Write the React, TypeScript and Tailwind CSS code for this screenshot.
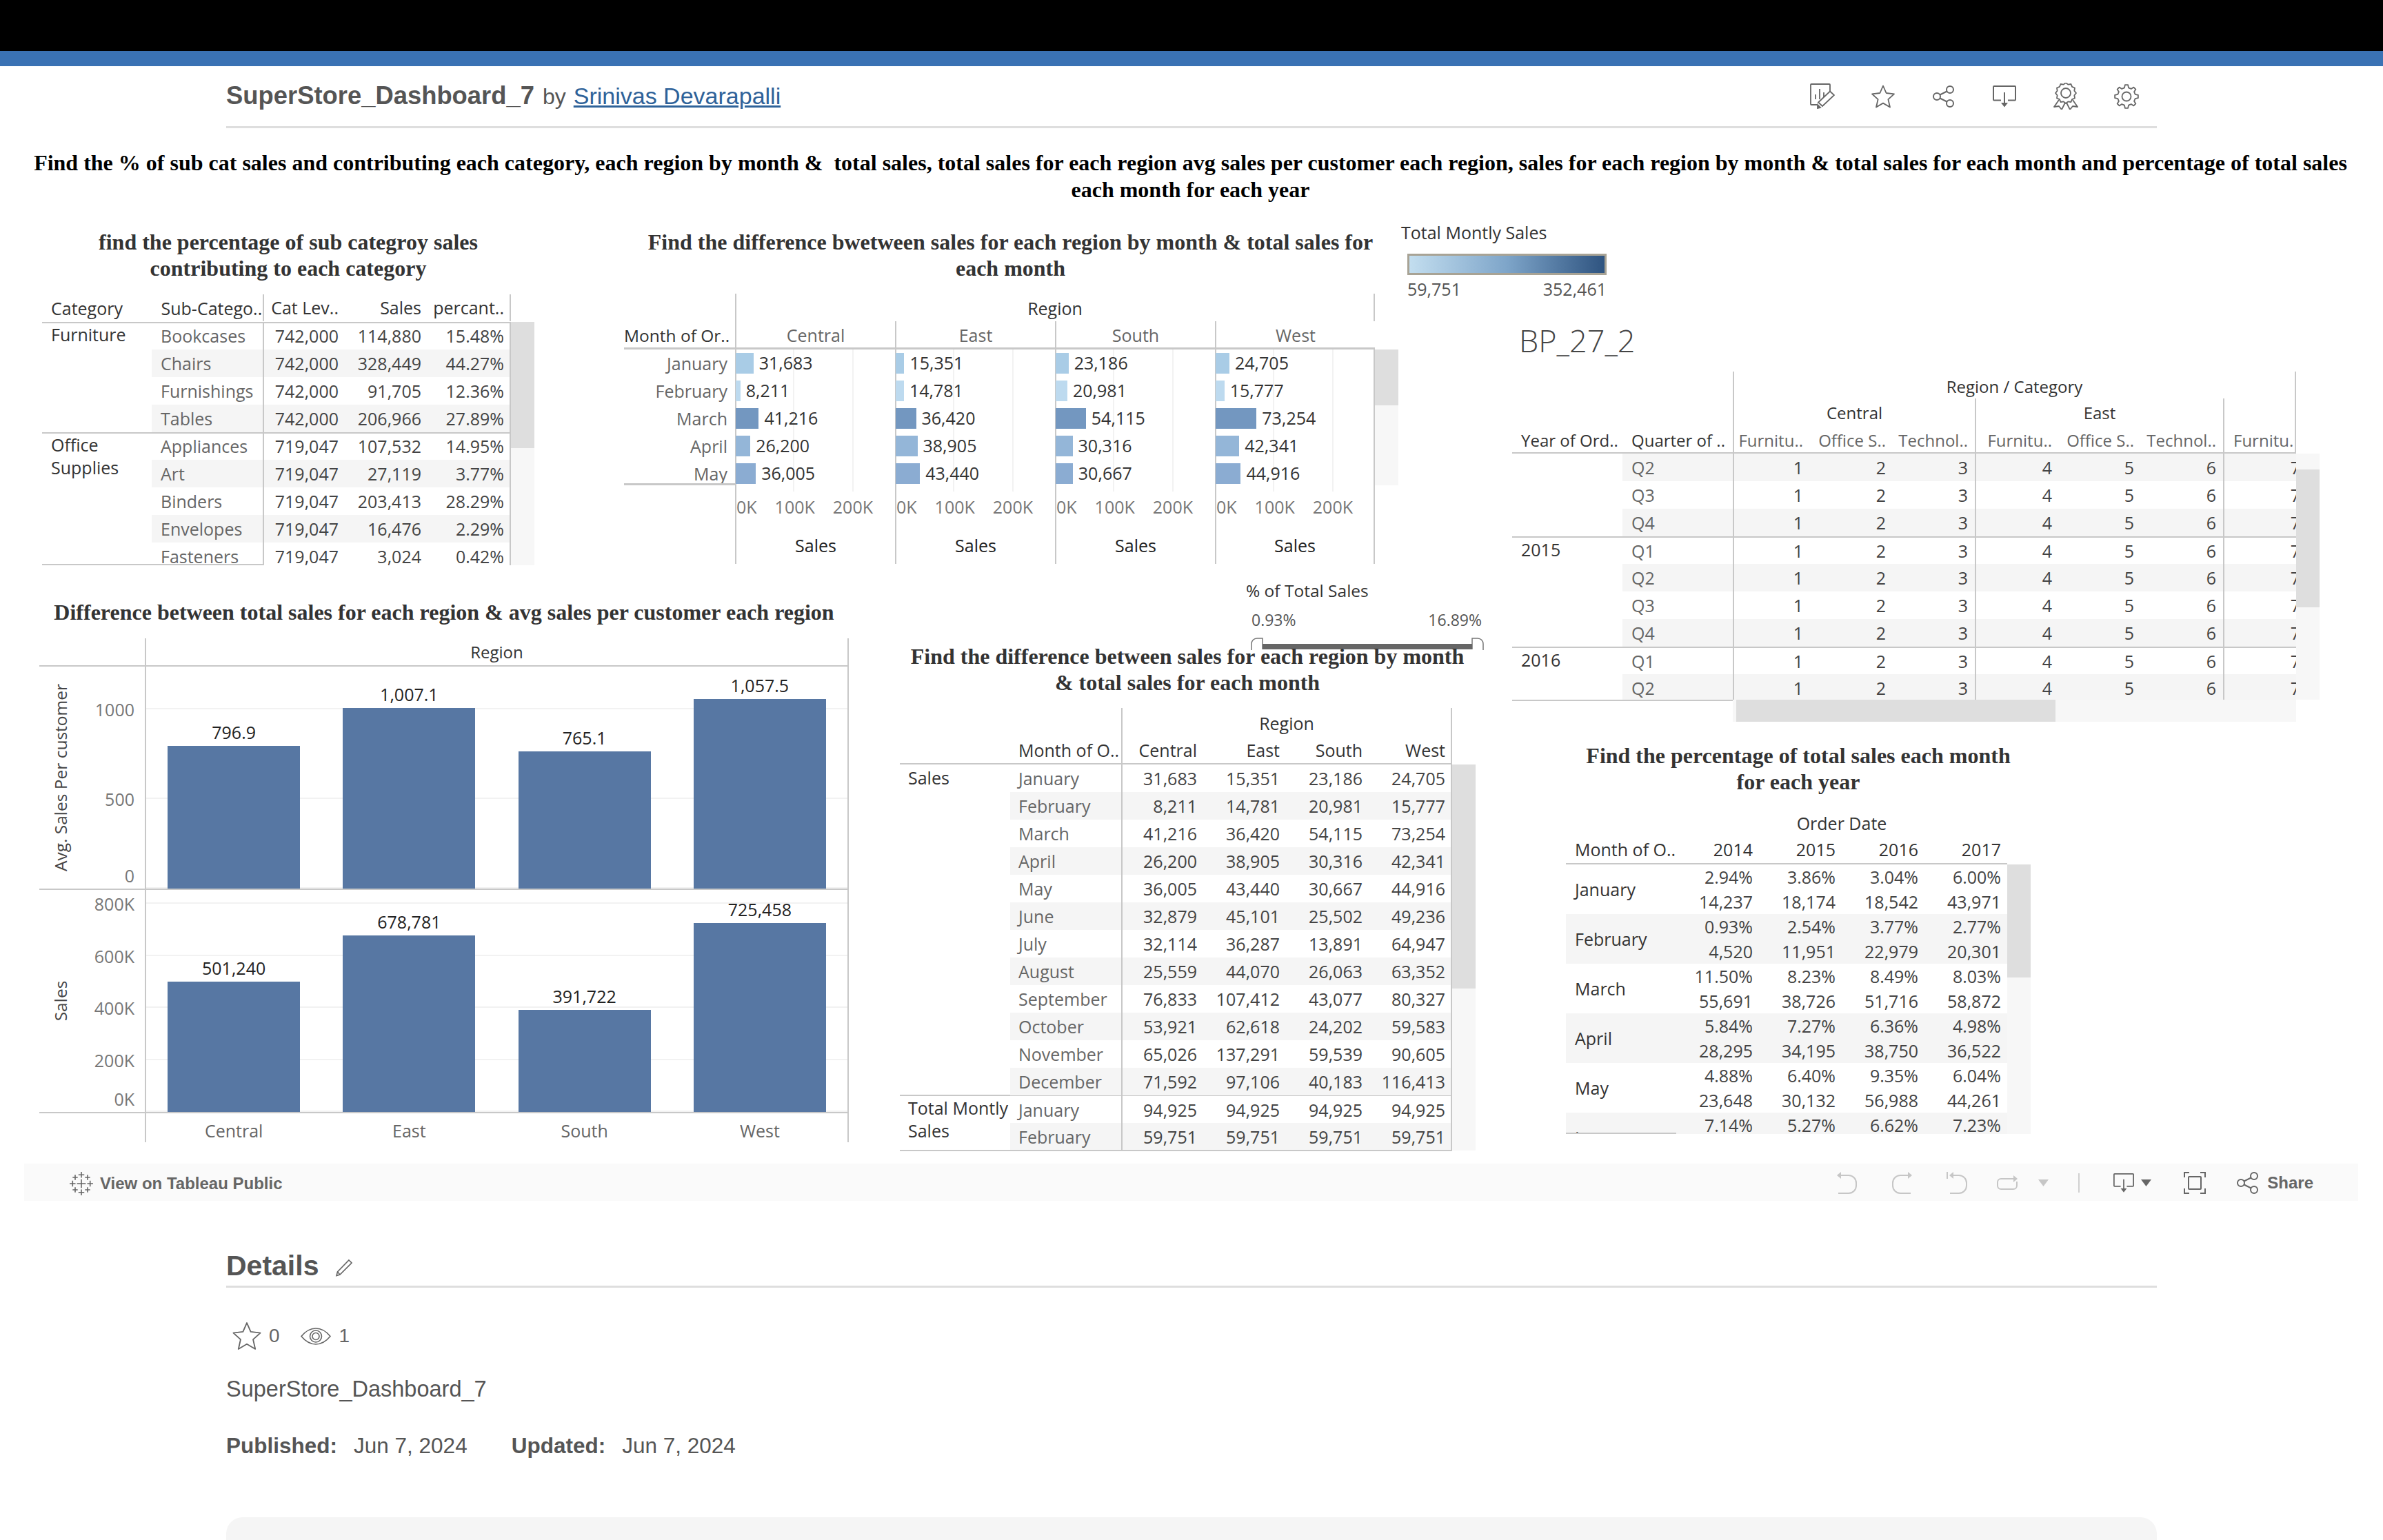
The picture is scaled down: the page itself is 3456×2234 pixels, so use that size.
import React from 'react';

const regions = ['Central', 'East', 'South', 'West'];

const subCategories = [
  {
    name: 'Furniture',
    label: ['Furniture'],
    rows: [
      ['Bookcases', '742,000', '114,880', '15.48%'],
      ['Chairs', '742,000', '328,449', '44.27%'],
      ['Furnishings', '742,000', '91,705', '12.36%'],
      ['Tables', '742,000', '206,966', '27.89%'],
    ],
  },
  {
    name: 'Office',
    label: ['Office', 'Supplies'],
    rows: [
      ['Appliances', '719,047', '107,532', '14.95%'],
      ['Art', '719,047', '27,119', '3.77%'],
      ['Binders', '719,047', '203,413', '28.29%'],
      ['Envelopes', '719,047', '16,476', '2.29%'],
      ['Fasteners', '719,047', '3,024', '0.42%'],
    ],
  },
];

const monthlyBars = [
  { month: 'January', color: '#a9cce6', values: [31683, 15351, 23186, 24705] },
  { month: 'February', color: '#bddaef', values: [8211, 14781, 20981, 15777] },
  { month: 'March', color: '#7397c0', values: [41216, 36420, 54115, 73254] },
  { month: 'April', color: '#94b6d8', values: [26200, 38905, 30316, 42341] },
  { month: 'May', color: '#8bacd2', values: [36005, 43440, 30667, 44916] },
];

const monthlyTable = [
  ['January', '31,683', '15,351', '23,186', '24,705'],
  ['February', '8,211', '14,781', '20,981', '15,777'],
  ['March', '41,216', '36,420', '54,115', '73,254'],
  ['April', '26,200', '38,905', '30,316', '42,341'],
  ['May', '36,005', '43,440', '30,667', '44,916'],
  ['June', '32,879', '45,101', '25,502', '49,236'],
  ['July', '32,114', '36,287', '13,891', '64,947'],
  ['August', '25,559', '44,070', '26,063', '63,352'],
  ['September', '76,833', '107,412', '43,077', '80,327'],
  ['October', '53,921', '62,618', '24,202', '59,583'],
  ['November', '65,026', '137,291', '59,539', '90,605'],
  ['December', '71,592', '97,106', '40,183', '116,413'],
];

const totalTable = [
  ['January', '94,925', '94,925', '94,925', '94,925'],
  ['February', '59,751', '59,751', '59,751', '59,751'],
];

const percentTable = [
  { month: 'January', pct: ['2.94%', '3.86%', '3.04%', '6.00%'], sales: ['14,237', '18,174', '18,542', '43,971'] },
  { month: 'February', pct: ['0.93%', '2.54%', '3.77%', '2.77%'], sales: ['4,520', '11,951', '22,979', '20,301'] },
  { month: 'March', pct: ['11.50%', '8.23%', '8.49%', '8.03%'], sales: ['55,691', '38,726', '51,716', '58,872'] },
  { month: 'April', pct: ['5.84%', '7.27%', '6.36%', '4.98%'], sales: ['28,295', '34,195', '38,750', '36,522'] },
  { month: 'May', pct: ['4.88%', '6.40%', '9.35%', '6.04%'], sales: ['23,648', '30,132', '56,988', '44,261'] },
  { month: 'June', pct: ['7.14%', '5.27%', '6.62%', '7.23%'], sales: ['', '', '', ''] },
];

const quarterGroups = [
  { year: '', quarters: ['Q2', 'Q3', 'Q4'] },
  { year: '2015', quarters: ['Q1', 'Q2', 'Q3', 'Q4'] },
  { year: '2016', quarters: ['Q1', 'Q2'] },
];

// ---- icons ----

function gearPoints(teeth: number, outer: number, inner: number, cx: number, cy: number) {
  const pts: string[] = [];
  const step = (Math.PI * 2) / teeth;
  for (let i = 0; i < teeth; i++) {
    const a = i * step - Math.PI / 2;
    const list = [
      [a - step * 0.3, inner],
      [a - step * 0.16, outer],
      [a + step * 0.16, outer],
      [a + step * 0.3, inner],
    ];
    list.forEach(([ang, r]) => pts.push(`${(cx + Math.cos(ang) * r).toFixed(2)},${(cy + Math.sin(ang) * r).toFixed(2)}`));
  }
  return pts.join(' ');
}

function zigzagPoints(teeth: number, outer: number, inner: number, cx: number, cy: number) {
  const pts: string[] = [];
  const step = Math.PI / teeth;
  for (let i = 0; i < teeth * 2; i++) {
    const r = i % 2 === 0 ? outer : inner;
    const a = i * step - Math.PI / 2;
    pts.push(`${(cx + Math.cos(a) * r).toFixed(2)},${(cy + Math.sin(a) * r).toFixed(2)}`);
  }
  return pts.join(' ');
}

const STAR = 'M18 2.5 L22.6 13 L34 14.4 L25.4 22.2 L28 33.5 L18 27.6 L8 33.5 L10.6 22.2 L2 14.4 L13.4 13 Z';

function EditIcon() {
  return (
    <svg width="36" height="37" viewBox="0 0 36 37" fill="none" stroke="#666" strokeWidth="1.8">
      <path d="M29 12V2a1 1 0 0 0-1-1H2a1 1 0 0 0-1 1v28a1 1 0 0 0 1 1h8" />
      <path d="M8 16v7M14 8v15M20 13v7" />
      <path d="M29 11.5l6 5.5-17 16-6-5.5z" />
      <path d="M11 31l4 4-4 1z" fill="#666" />
    </svg>
  );
}

function StarIcon({ size = 36 }: { size?: number }) {
  return (
    <svg width={size} height={size} viewBox="0 0 36 36" fill="none" stroke="#666" strokeWidth={size > 36 ? 1.5 : 1.8} strokeLinejoin="round">
      <path d={STAR} />
    </svg>
  );
}

function ShareIcon({ stroke = '#666' }: { stroke?: string }) {
  return (
    <svg width="31" height="32" viewBox="0 0 31 32" fill="none" stroke={stroke} strokeWidth="2">
      <circle cx="25" cy="6" r="5" />
      <circle cx="6" cy="16" r="5" />
      <circle cx="25" cy="26" r="5" />
      <path d="M10.5 13.5L20.5 8.5M10.5 18.5L20.5 23.5" />
    </svg>
  );
}

function DownloadIcon({ large = false }: { large?: boolean }) {
  return (
    <svg width={large ? 30 : 34} height={32} viewBox="0 0 34 32" fill="none" stroke="#666" strokeWidth="2">
      <path d="M12 21.5H2a1 1 0 0 1-1-1V2a1 1 0 0 1 1-1h30a1 1 0 0 1 1 1v18.500a1 1 0 0 1-1 1H22" />
      <path d="M17 10v16" />
      <path d="M12 25h10l-5 6.500z" fill="#666" stroke="none" />
    </svg>
  );
}

function AwardIcon() {
  return (
    <svg width="36" height="39" viewBox="0 0 36 39" fill="none" stroke="#666" strokeWidth="1.8" strokeLinejoin="round">
      <polygon points={zigzagPoints(12, 15, 12.8, 18, 15)} />
      <circle cx="18" cy="15" r="7" />
      <path d="M8 25L1 35l7-1 4 5 5-10" />
      <path d="M28 25l7 10-7-1-4 5-5-10" />
    </svg>
  );
}

function GearIcon() {
  return (
    <svg width="36" height="36" viewBox="0 0 36 36" fill="none" stroke="#666" strokeWidth="1.8" strokeLinejoin="round">
      <polygon points={gearPoints(8, 17, 13, 18, 18)} />
      <circle cx="18" cy="18" r="6.500" />
    </svg>
  );
}

function TableauIcon() {
  const large = [[17, 17]];
  const medium = [[17, 5], [17, 29], [5, 17], [29, 17]];
  const small = [[8.500, 8.500], [25.500, 8.500], [8.500, 25.500], [25.500, 25.500]];
  const cross = (x: number, y: number, r: number) => `M${x - r} ${y}h${r * 2}M${x} ${y - r}v${r * 2}`;
  return (
    <svg width="36" height="36" viewBox="0 0 34 34" fill="none" stroke="#666" strokeWidth="1.5">
      {large.map(([x, y]) => <path key={`${x}${y}`} d={cross(x, y, 6)} />)}
      {medium.map(([x, y]) => <path key={`${x}${y}`} d={cross(x, y, 4)} />)}
      {small.map(([x, y]) => <path key={`${x}${y}`} d={cross(x, y, 3.500)} />)}
    </svg>
  );
}

function UndoIcon({ flip = false, bar = false }: { flip?: boolean; bar?: boolean }) {
  return (
    <svg width="32" height="32" viewBox="0 0 32 32" fill="none" stroke="#c6c6c6" strokeWidth="2" className={flip ? '-scale-x-100' : ''}>
      {bar && <path d="M1 0v10" />}
      <path d={bar ? 'M8 5h10a11 11 0 0 1 11 11v4a11 11 0 0 1-11 11H5' : 'M5 5h13a11 11 0 0 1 11 11v4a11 11 0 0 1-11 11H3'} />
      <path d={bar ? 'M4 5l6-5v10z' : 'M1 5l6-5v10z'} fill="#c6c6c6" stroke="none" />
    </svg>
  );
}

function RepeatIcon() {
  return (
    <svg width="32" height="22" viewBox="0 0 32 22" fill="none" stroke="#c6c6c6" strokeWidth="2">
      <path d="M27 5H7a5 5 0 0 0-5 5v5a5 5 0 0 0 5 5h18a5 5 0 0 0 5-5v-6" />
      <path d="M31 5l-6-5v10z" fill="#c6c6c6" stroke="none" />
    </svg>
  );
}

function Caret({ color }: { color: string }) {
  return (
    <svg width="15" height="10" viewBox="0 0 15 10">
      <path d="M0 0h15l-7.500 10z" fill={color} />
    </svg>
  );
}

function FitIcon() {
  return (
    <svg width="32" height="32" viewBox="0 0 32 32" fill="none" stroke="#666" strokeWidth="2">
      <path d="M8 1H1v7M24 1h7v7M8 31H1v-7M24 31h7v-7" />
      <rect x="7" y="7" width="18" height="18" rx="1" />
    </svg>
  );
}

function PencilIcon() {
  return (
    <svg width="26" height="26" viewBox="0 0 26 26" fill="none" stroke="#666" strokeWidth="1.6">
      <path d="M20 2l4 4L7 23l-5 1.500L3.500 19z" />
      <path d="M3.500 19L7 23" />
    </svg>
  );
}

function EyeIcon() {
  return (
    <svg width="44" height="25" viewBox="0 0 44 25" fill="none" stroke="#666" strokeWidth="1.6">
      <path d="M1 12.500C8 4 15 1 22 1s14 3 21 11.500C36 21 29 24 22 24S8 21 1 12.500z" />
      <circle cx="22" cy="12.500" r="8.500" />
      <circle cx="22" cy="12.500" r="5" />
    </svg>
  );
}

// ---- shared bits ----

function PanelTitle({ lines, className = '' }: { lines: string[]; className?: string }) {
  return (
    <div className={`text-center font-['Liberation_Serif',serif] font-bold text-[32px] leading-[38px] text-[#333] whitespace-nowrap ${className}`}>
      {lines.map((line) => (
        <div key={line}>{line}</div>
      ))}
    </div>
  );
}

function VScroll({ height, thumb, top, offset = 0 }: { height: number; thumb: number; top: number; offset?: number }) {
  return (
    <div className="w-[34px] shrink-0" style={{ paddingTop: top }}>
      <div className="bg-[#f7f7f7] w-full" style={{ height, paddingTop: offset }}>
        <div className="bg-[#dedede] w-full" style={{ height: thumb }} />
      </div>
    </div>
  );
}

function NumRow({ values, className = '', lineHeight = 'leading-[40px]' }: { values: string[]; className?: string; lineHeight?: string }) {
  return (
    <div className={`grid grid-cols-[118px_120px_120px_120px] w-[480px] border-l-2 border-r-2 border-[#c8c8c8] ${className || 'text-[#444]'}`}>
      {values.map((v, i) => (
        <div key={i} className={`text-right pr-[10px] ${lineHeight}`}>{v}</div>
      ))}
    </div>
  );
}

// ---- panels ----

function SubCategoryTable() {
  return (
    <div className="w-[714px] ml-[4px]">
      <PanelTitle lines={['find the percentage of sub categroy sales', 'contributing to each category']} />
      <div className="flex mt-[18px]">
        <div className="relative w-[681px] h-[394px] overflow-hidden">
          <div className="flex h-[41px] text-[#333] items-center pt-[2px]">
            <div className="w-[160px] pl-[13px]">Category</div>
            <div className="w-[161px] pl-[13px] whitespace-nowrap">Sub-Catego..</div>
            <div className="grid grid-cols-[118px_120px_120px] w-[360px] h-full items-center border-l-2 border-r-2 border-[#c8c8c8] text-right -mt-[2px] whitespace-nowrap">
              <div className="pr-[10px]">Cat Lev..</div>
              <div className="pr-[10px]">Sales</div>
              <div className="pr-[10px]">percant..</div>
            </div>
          </div>
          {subCategories.map((group) => (
            <div key={group.name} className="flex border-t-2 border-[#c8c8c8]">
              <div className="w-[160px] pl-[13px] leading-[33px] text-[#333]">
                {group.label.map((l) => <div key={l}>{l}</div>)}
              </div>
              <div className="flex-1">
                {group.rows.map((row, i) => (
                  <div key={row[0]} className={`flex ${i === 0 ? 'h-[38px] leading-[36px]' : 'h-[40px] leading-[40px]'} ${i % 2 === 1 ? 'bg-[#f5f5f5]' : ''}`}>
                    <div className="w-[161px] pl-[13px] text-[#666]">{row[0]}</div>
                    <div className="grid grid-cols-[118px_120px_120px] w-[360px] border-l-2 border-r-2 border-[#c8c8c8] text-[#444] text-right">
                      {row.slice(1).map((v, j) => (
                        <div key={j} className="pr-[10px]">{v}</div>
                      ))}
                    </div>
                  </div>
                ))}
              </div>
            </div>
          ))}
          <div className="absolute left-0 bottom-0 w-[321px] h-[2px] bg-[#c8c8c8]" />
        </div>
        <VScroll top={41} height={353} thumb={183} />
      </div>
    </div>
  );
}

function RegionBarsTable() {
  return (
    <div className="w-[1121px] ml-[130px]">
      <PanelTitle lines={['Find the difference bwetween sales for each region by month & total sales for', 'each month']} />
      <div className="flex mt-[18px]">
        <div className="w-[1089px]">
          <div className="flex h-[40px] items-center">
            <div className="w-[161px]" />
            <div className="w-[928px] h-full border-l-2 border-r-2 border-[#c8c8c8] flex items-center justify-center text-[#333] pt-[3px]">Region</div>
          </div>
          <div className="flex h-[41px] border-b-[3px] border-[#c8c8c8]">
            <div className="w-[161px] text-right pr-[11px] leading-[41px] text-[#333] whitespace-nowrap text-[24.5px]">Month of Or..</div>
            {regions.map((r) => (
              <div key={r} className="w-[232px] border-l-2 border-[#c8c8c8] text-center leading-[41px] text-[#666]">{r}</div>
            ))}
          </div>
          <div className="flex">
            <div className="w-[161px]">
              <div className="border-b-[3px] border-[#c8c8c8] h-[197px] overflow-hidden">
                {monthlyBars.map((m) => (
                  <div key={m.month} className="h-[40px] text-right pr-[11px] leading-[40px] text-[#666]">{m.month}</div>
                ))}
              </div>
            </div>
            {regions.map((r, col) => (
              <div key={r} className={`relative w-[232px] border-l-2 border-[#c8c8c8] h-[311px] ${col === 3 ? 'border-r-2' : ''}`}>
                <div className="absolute left-[82px] top-0 h-[206px] w-[2px] bg-[#f2f2f2]" />
                <div className="absolute left-[168px] top-0 h-[206px] w-[2px] bg-[#f2f2f2]" />
                <div className="relative h-[197px] -ml-[1px]">
                  {monthlyBars.map((m) => (
                    <div key={m.month} className="flex items-center h-[40px] text-[#333]">
                      <div className="h-[30px]" style={{ width: m.values[col] * 0.00081, backgroundColor: m.color }} />
                      <div className="ml-[8px]">{m.values[col].toLocaleString('en-US')}</div>
                    </div>
                  ))}
                </div>
                <div className="flex gap-[26px] mt-[14px] leading-[34px] text-[#777]">
                  <span>0K</span>
                  <span>100K</span>
                  <span>200K</span>
                </div>
                <div className="text-center mt-[22px] leading-[34px] text-[#222] font-medium">Sales</div>
              </div>
            ))}
          </div>
        </div>
        <VScroll top={81} height={197} thumb={81} />
      </div>
    </div>
  );
}

type PlotProps = {
  title: string;
  ticks: { label: string; value: number; offset?: number }[];
  bars: { value: number; label: string }[];
  scale: number;
};

function Plot({ title, ticks, bars, scale }: PlotProps) {
  return (
    <div className="flex h-[324px] border-b-2 border-[#c8c8c8]">
      <div className="relative w-[153px] shrink-0">
        <div className="absolute top-1/2 left-[31px] -translate-x-1/2 -translate-y-1/2 -rotate-90 text-[#444] whitespace-nowrap text-[24.5px]">
          {title}
        </div>
        {ticks.map((t) => (
          <div
            key={t.label}
            className="absolute right-[15px] text-[#777] translate-y-1/2 leading-[34px]"
            style={{ bottom: t.value * scale + (t.offset ?? 0) }}
          >
            {t.label}
          </div>
        ))}
      </div>
      <div className="relative flex-1 grid grid-cols-4 border-l-2 border-r-2 border-[#c8c8c8]">
        {ticks.map((t) => (
          <div key={t.label} className="absolute left-0 right-0 h-[2px] bg-[#f2f2f2]" style={{ bottom: t.value * scale }} />
        ))}
        {bars.map((b) => (
          <div key={b.label} className="relative flex flex-col items-center justify-end">
            <div className="leading-[32px] mb-[4px] text-[#222]">{b.label}</div>
            <div className="w-[192px] bg-[#5777a3]" style={{ height: b.value * scale }} />
          </div>
        ))}
      </div>
    </div>
  );
}

function RegionBarChart() {
  return (
    <div className="w-[1174px] pt-[29px]">
      <PanelTitle lines={['Difference between total sales for each region & avg sales per customer each region']} />
      <div className="mt-[19px]">
        <div className="flex h-[41px] border-b-2 border-[#c8c8c8]">
          <div className="w-[153px]" />
          <div className="flex-1 border-l-2 border-r-2 border-[#c8c8c8] text-center leading-[40px] text-[#333] text-[24px]">Region</div>
        </div>
        <Plot
          title="Avg. Sales Per customer"
          scale={0.26}
          ticks={[
            { label: '0', value: 0, offset: 19 },
            { label: '500', value: 500 },
            { label: '1000', value: 1000 },
          ]}
          bars={[
            { value: 796.9, label: '796.9' },
            { value: 1007.1, label: '1,007.1' },
            { value: 765.1, label: '765.1' },
            { value: 1057.5, label: '1,057.5' },
          ]}
        />
        <Plot
          title="Sales"
          scale={0.0003775}
          ticks={[
            { label: '0K', value: 0, offset: 19 },
            { label: '200K', value: 200000 },
            { label: '400K', value: 400000 },
            { label: '600K', value: 600000 },
            { label: '800K', value: 800000 },
          ]}
          bars={[
            { value: 501240, label: '501,240' },
            { value: 678781, label: '678,781' },
            { value: 391722, label: '391,722' },
            { value: 725458, label: '725,458' },
          ]}
        />
        <div className="flex h-[42px]">
          <div className="w-[153px]" />
          <div className="flex-1 grid grid-cols-4 border-l-2 border-r-2 border-[#c8c8c8] text-center leading-[50px] text-[#666]">
            {regions.map((r) => <div key={r}>{r}</div>)}
          </div>
        </div>
      </div>
    </div>
  );
}

function TotalSlider() {
  return (
    <div className="ml-[502px] w-[343px] h-[93px]">
      <div className="leading-[34px] text-[24.5px] text-[#333]">% of Total Sales</div>
      <div className="flex justify-between pl-[8px] pr-[1px] mt-[8px] leading-[34px] text-[23px] text-[#555]">
        <span>0.93%</span>
        <span>16.89%</span>
      </div>
    </div>
  );
}

function MonthRegionTable() {
  return (
    <div className="relative w-[834px] ml-[74px]">
      <TotalSlider />
      <svg className="absolute left-[509px] top-[85px]" width="338" height="18" viewBox="0 0 338 18" fill="none">
        <path d="M1 18V9a8 8 0 0 1 8-8h8v16" stroke="#777" strokeWidth="1.5" />
        <path d="M321 17V1h8a8 8 0 0 1 8 8v9" stroke="#777" strokeWidth="1.5" />
        <rect x="17" y="9" width="304" height="8" fill="#666" />
      </svg>
      <PanelTitle className="relative" lines={['Find the difference between sales for each region by month', '& total sales for each month']} />
      <div className="flex mt-[18px]">
        <div className="w-[801px]">
          <div className="flex h-[41px]">
            <div className="w-[321px]" />
            <div className="w-[480px] border-l-2 border-r-2 border-[#c8c8c8] text-center leading-[44px] text-[#333]">Region</div>
          </div>
          <div className="flex h-[41px] border-b-2 border-[#c8c8c8]">
            <div className="w-[160px]" />
            <div className="w-[161px] pl-[12px] leading-[41px] text-[#333] whitespace-nowrap">Month of O..</div>
            <NumRow values={regions} className="text-[#333]" lineHeight="leading-[41px]" />
          </div>
          <div className="flex">
            <div className="w-[160px] pl-[12px] pt-[1px] leading-[36px] text-[#333]">Sales</div>
            <div>
              {monthlyTable.map((row, i) => (
                <div key={row[0]} className={`flex h-[40px] ${i % 2 === 1 ? 'bg-[#f5f5f5]' : ''}`}>
                  <div className="w-[161px] pl-[12px] leading-[40px] text-[#666]">{row[0]}</div>
                  <NumRow values={row.slice(1)} />
                </div>
              ))}
            </div>
          </div>
          <div className="flex border-t-2 border-b-2 border-[#c8c8c8] -mt-[1px]">
            <div className="w-[160px] pl-[12px] pt-[1px] leading-[33px] text-[#333] whitespace-nowrap">
              <div>Total Montly</div>
              <div>Sales</div>
            </div>
            <div>
              {totalTable.map((row, i) => (
                <div key={i} className={`flex h-[39px] ${i % 2 === 1 ? 'bg-[#f5f5f5]' : ''}`}>
                  <div className="w-[161px] pl-[12px] leading-[40px] text-[#666]">{row[0]}</div>
                  <NumRow values={row.slice(1)} />
                </div>
              ))}
            </div>
          </div>
        </div>
        <VScroll top={82} height={560} thumb={325} />
      </div>
    </div>
  );
}

function Legend() {
  return (
    <div className="-ml-[128px] w-[320px] text-[25px]">
      <div className="leading-[34px] text-[#333]">Total Montly Sales</div>
      <div className="ml-[9px] mt-[14px] w-[289px] h-[31px] border-[3px] border-[#a8a395] bg-gradient-to-r from-[#c3deef] via-[#7ea5c9] to-[#2f5480]" />
      <div className="ml-[9px] w-[289px] mt-[3px] flex justify-between leading-[34px] text-[#555]">
        <span>59,751</span>
        <span>352,461</span>
      </div>
    </div>
  );
}

function QuarterTable() {
  return (
    <div className="ml-[33px] mt-[35px]">
      <div className="pl-[10px] text-[45px] leading-[46px] text-[#444] font-light">BP_27_2</div>
      <div className="flex mt-[22px]">
        <div className="w-[1137px]">
          <div className="flex h-[39px]">
            <div className="w-[320px]" />
            <div className="flex-1 border-l-2 border-r-2 border-[#c8c8c8] text-center text-[24px] leading-[43px] text-[#333]">Region / Category</div>
          </div>
          <div className="flex h-[40px]">
            <div className="w-[320px]" />
            <div className="w-[351px] border-l-2 border-[#c8c8c8] text-center font-medium text-[24px] leading-[42px] text-[#333]">Central</div>
            <div className="w-[360px] border-l-2 border-[#c8c8c8] text-center font-medium text-[24px] leading-[42px] text-[#333]">East</div>
            <div className="w-[106px] border-l-2 border-r-2 border-[#c8c8c8]" />
          </div>
          <div className="flex h-[40px] border-b-2 border-[#c8c8c8] text-[24px] leading-[42px] whitespace-nowrap">
            <div className="w-[160px] pl-[13px] text-[#333]">Year of Ord..</div>
            <div className="w-[160px] pl-[13px] text-[#333]">Quarter of ..</div>
            <div className="w-[351px] grid grid-cols-[110px_120px_119px] border-l-2 border-[#c8c8c8] text-right text-[#666]">
              <div className="pr-[10px]">Furnitu..</div>
              <div className="pr-[10px]">Office S..</div>
              <div className="pr-[10px]">Technol..</div>
            </div>
            <div className="w-[360px] grid grid-cols-[120px_119px_119px] border-l-2 border-[#c8c8c8] text-right text-[#666]">
              <div className="pr-[10px]">Furnitu..</div>
              <div className="pr-[10px]">Office S..</div>
              <div className="pr-[10px]">Technol..</div>
            </div>
            <div className="w-[106px] border-l-2 border-r-2 border-[#c8c8c8] pl-[13px] overflow-hidden text-[#666]">Furnitu.</div>
          </div>
          <div className="h-[357px] overflow-hidden">
            {quarterGroups.map((g, gi) => (
              <div key={g.year} className={`flex ${gi > 0 ? 'border-t-2 border-[#c8c8c8]' : ''}`}>
                <div className="w-[160px] pl-[13px] leading-[34px] text-[#333]">{g.year}</div>
                <div>
                  {g.quarters.map((q, qi) => (
                    <div key={q} className={`flex ${gi > 0 && qi === 0 ? 'h-[38px] leading-[38px]' : 'h-[40px] leading-[40px]'} ${q === 'Q2' || q === 'Q4' ? 'bg-[#f5f5f5]' : ''}`}>
                      <div className="w-[160px] pl-[13px] text-[#666]">{q}</div>
                      <div className="w-[351px] grid grid-cols-[110px_120px_119px] border-l-2 border-[#c8c8c8] text-right text-[#444]">
                        <div className="pr-[10px]">1</div>
                        <div className="pr-[10px]">2</div>
                        <div className="pr-[10px]">3</div>
                      </div>
                      <div className="w-[360px] grid grid-cols-[120px_119px_119px] border-l-2 border-[#c8c8c8] text-right text-[#444]">
                        <div className="pr-[10px]">4</div>
                        <div className="pr-[10px]">5</div>
                        <div className="pr-[10px]">6</div>
                      </div>
                      <div className="w-[106px] border-l-2 border-[#c8c8c8] overflow-hidden text-[#444]">
                        <div className="w-[120px] text-right pr-[10px]">7</div>
                      </div>
                    </div>
                  ))}
                </div>
              </div>
            ))}
          </div>
          <div className="flex">
            <div className="w-[320px] h-[2px] bg-[#c8c8c8]" />
            <div className="w-[817px] h-[32px] bg-[#f7f7f7] pl-[5px]">
              <div className="w-[463px] h-full bg-[#dedede]" />
            </div>
          </div>
        </div>
        <VScroll top={119} height={357} thumb={200} offset={23} />
      </div>
    </div>
  );
}

function PercentTable() {
  return (
    <div className="ml-[111px] mt-[30px] w-[674px]">
      <PanelTitle lines={['Find the percentage of total sales each month', 'for each year']} />
      <div className="flex mt-[21px]">
        <div className="w-[640px] h-[471px] relative overflow-hidden">
          <div className="pl-[160px] h-[39px] text-center leading-[40px] text-[#333]">Order Date</div>
          <div className="flex h-[41px] border-b-2 border-[#c8c8c8] text-[#333] leading-[38px]">
            <div className="w-[160px] pl-[13px] whitespace-nowrap">Month of O..</div>
            {['2014', '2015', '2016', '2017'].map((y) => (
              <div key={y} className="w-[120px] text-right pr-[9px]">{y}</div>
            ))}
          </div>
          {percentTable.map((row, i) => (
            <div key={row.month} className={`flex h-[72px] shrink-0 ${i % 2 === 1 ? 'bg-[#f5f5f5]' : ''}`}>
              <div className="w-[160px] pl-[13px] leading-[72px] text-[#333]">{row.month}</div>
              {row.pct.map((p, j) => (
                <div key={j} className="w-[120px] text-right pr-[9px] text-[#444]">
                  <div className="leading-[36px]">{p}</div>
                  <div className="leading-[36px]">{row.sales[j]}</div>
                </div>
              ))}
            </div>
          ))}
          <div className="absolute left-0 bottom-0 w-[160px] h-[2px] bg-[#c8c8c8]" />
        </div>
        <VScroll top={80} height={391} thumb={164} />
      </div>
    </div>
  );
}

function Toolbar() {
  return (
    <div className="mx-[35px] w-[3385px] h-[54px] bg-[#fafafa] flex items-center justify-between font-['Liberation_Sans',sans-serif] font-bold text-[24px] text-[#666]">
      <div className="flex items-center pl-[65px] gap-[9px] pt-[3px]">
        <TableauIcon />
        <span>View on Tableau Public</span>
      </div>
      <div className="flex items-center pr-[65px] pt-[1px]">
        <UndoIcon />
        <div className="ml-[47px]"><UndoIcon flip /></div>
        <div className="ml-[49px]"><UndoIcon bar /></div>
        <div className="ml-[40px]"><RepeatIcon /></div>
        <div className="ml-[29px]"><Caret color="#c6c6c6" /></div>
        <div className="ml-[43px] w-[2px] h-[28px] bg-[#d0d0d0]" />
        <div className="ml-[49px]"><DownloadIcon large /></div>
        <div className="ml-[10px]"><Caret color="#666" /></div>
        <div className="ml-[47px]"><FitIcon /></div>
        <div className="ml-[45px]"><ShareIcon /></div>
        <span className="ml-[13px]">Share</span>
      </div>
    </div>
  );
}

export default function App() {
  return (
    <div className="w-[3456px] h-[2234px] overflow-hidden bg-white font-['Open_Sans',sans-serif] text-[25px]">
      <div className="h-[74px] bg-black" />
      <div className="h-[22px] bg-[#3a72b4]" />

      <header className="mx-[328px] w-[2800px] h-[90px] border-b-[3px] border-[#dedede] flex items-center justify-between font-['Liberation_Sans',sans-serif] text-[#555]">
        <div className="flex items-baseline whitespace-nowrap">
          <span className="font-bold text-[36.4px]">SuperStore_Dashboard_7</span>
          <span className="ml-[12px] text-[32px]">by</span>
          <span className="ml-[11px] text-[34px] text-[#2e6299] underline">Srinivas Devarapalli</span>
        </div>
        <div className="flex items-center mr-[26px]">
          <EditIcon />
          <div className="ml-[52px]"><StarIcon /></div>
          <div className="ml-[54px]"><ShareIcon /></div>
          <div className="ml-[56px]"><DownloadIcon /></div>
          <div className="ml-[54px]"><AwardIcon /></div>
          <div className="ml-[52px]"><GearIcon /></div>
        </div>
      </header>

      <div className="mt-[31px] h-[78px] pr-[3px] text-center font-['Liberation_Serif',serif] font-bold text-[32px] leading-[38.5px] text-black whitespace-nowrap">
        <div>Find the % of sub cat sales and contributing each category, each region by month &amp;{'\u00a0'} total sales, total sales for each region avg sales per customer each region, sales for each region by month &amp; total sales for each month and percentage of total sales</div>
        <div>each month for each year</div>
      </div>

      <div className="flex h-[1368px] mt-[25px]">
        <div className="w-[2160px] shrink-0 pl-[57px] pt-[12px]">
          <div className="flex h-[508px]">
            <SubCategoryTable />
            <RegionBarsTable />
          </div>
          <div className="flex">
            <RegionBarChart />
            <MonthRegionTable />
          </div>
        </div>
        <div className="flex-1">
          <Legend />
          <QuarterTable />
          <PercentTable />
        </div>
      </div>

      <Toolbar />

      <div className="mx-[328px] w-[2800px] font-['Liberation_Sans',sans-serif] text-[#555]">
        <div className="mt-[66px] h-[60px] border-b-[3px] border-[#dedede] flex items-center gap-[24px]">
          <span className="font-bold text-[41px]">Details</span>
          <div className="mt-[4px]"><PencilIcon /></div>
        </div>
        <div className="mt-[48px] h-[44px] flex items-center text-[28px] pl-[8px] leading-none">
          <StarIcon size={44} />
          <span className="ml-[10px] text-[#666]">0</span>
          <div className="ml-[30px]"><EyeIcon /></div>
          <span className="ml-[12px] text-[#666]">1</span>
        </div>
        <div className="mt-[35px] text-[32.500px] leading-[40px]">SuperStore_Dashboard_7</div>
        <div className="mt-[42px] flex text-[31.500px] leading-[40px]">
          <span className="font-bold">Published:</span>
          <span className="ml-[24px]">Jun 7, 2024</span>
          <span className="ml-[64px] font-bold">Updated:</span>
          <span className="ml-[24px]">Jun 7, 2024</span>
        </div>
        <div className="mt-[84px] h-[60px] rounded-t-[24px] bg-[#f5f5f5]" />
      </div>
    </div>
  );
}
